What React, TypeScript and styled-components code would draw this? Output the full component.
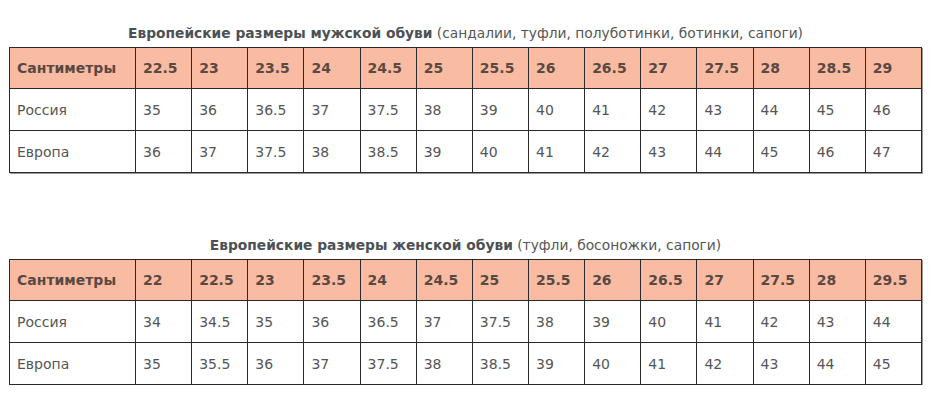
import styled, { createGlobalStyle } from 'styled-components'

const GlobalStyle = createGlobalStyle`
  body {
    margin: 0;
    background: #ffffff;
    font-family: 'DejaVu Sans', 'Liberation Sans', sans-serif;
  }
`

const Page = styled.div`
  width: 940px;
  padding: 23px 0 0 9px;
  box-sizing: border-box;
`

const Section = styled.section<{ $gap: number }>`
  width: 913px;
  margin-bottom: ${p => p.$gap}px;
`

const Title = styled.div`
  height: 20px;
  line-height: 20px;
  margin-bottom: 4px;
  text-align: center;
  font-size: 13.8px;
  color: #555555;
  white-space: nowrap;

  b {
    color: #4b5156;
    font-weight: bold;
  }
`

const Table = styled.table`
  width: 913px;
  border-collapse: collapse;
  table-layout: fixed;
  font-size: 14px;
  color: #555555;
  box-shadow: 1px 1px 0 #9a9a9a;
`

const HeadRow = styled.tr`
  height: 41px;
  background: #f9bba2;
`

const Row = styled.tr`
  height: 42px;
`

const Cell = styled.td<{ $head?: boolean }>`
  border: 1px solid #2a2a2a;
  padding: 0 7px;
  text-align: left;
  vertical-align: middle;
  white-space: nowrap;
  font-weight: ${p => (p.$head ? 'bold' : 'normal')};
  color: ${p => (p.$head ? '#5a4843' : '#555555')};
`

const FirstCol = styled.col`
  width: 126px;
`

interface SizeTable {
  title: string
  note: string
  cm: string[]
  ru: string[]
  eu: string[]
}

const tables: SizeTable[] = [
  {
    title: 'Европейские размеры мужской обуви',
    note: '(сандалии, туфли, полуботинки, ботинки, сапоги)',
    cm: ['22.5', '23', '23.5', '24', '24.5', '25', '25.5', '26', '26.5', '27', '27.5', '28', '28.5', '29'],
    ru: ['35', '36', '36.5', '37', '37.5', '38', '39', '40', '41', '42', '43', '44', '45', '46'],
    eu: ['36', '37', '37.5', '38', '38.5', '39', '40', '41', '42', '43', '44', '45', '46', '47'],
  },
  {
    title: 'Европейские размеры женской обуви',
    note: '(туфли, босоножки, сапоги)',
    cm: ['22', '22.5', '23', '23.5', '24', '24.5', '25', '25.5', '26', '26.5', '27', '27.5', '28', '29.5'],
    ru: ['34', '34.5', '35', '36', '36.5', '37', '37.5', '38', '39', '40', '41', '42', '43', '44'],
    eu: ['35', '35.5', '36', '37', '37.5', '38', '38.5', '39', '40', '41', '42', '43', '44', '45'],
  },
]

function SizeChart({ data }: { data: SizeTable }) {
  return (
    <>
      <Title>
        <b>{data.title}</b> {data.note}
      </Title>
      <Table>
        <colgroup>
          <FirstCol />
          {data.cm.map((_, i) => <col key={i} />)}
        </colgroup>
        <tbody>
          <HeadRow>
            <Cell $head>Сантиметры</Cell>
            {data.cm.map((v, i) => <Cell $head key={i}>{v}</Cell>)}
          </HeadRow>
          <Row>
            <Cell>Россия</Cell>
            {data.ru.map((v, i) => <Cell key={i}>{v}</Cell>)}
          </Row>
          <Row>
            <Cell>Европа</Cell>
            {data.eu.map((v, i) => <Cell key={i}>{v}</Cell>)}
          </Row>
        </tbody>
      </Table>
    </>
  )
}

function App() {
  return (
    <>
      <GlobalStyle />
      <Page>
        <Section $gap={62}>
          <SizeChart data={tables[0]} />
        </Section>
        <Section $gap={0}>
          <SizeChart data={tables[1]} />
        </Section>
      </Page>
    </>
  )
}

export default App
